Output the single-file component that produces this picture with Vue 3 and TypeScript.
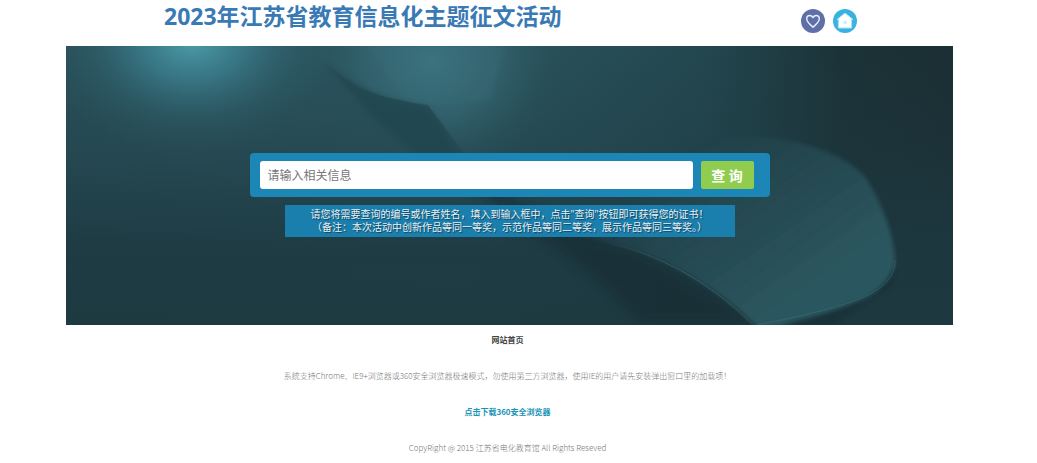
<script setup lang="ts">
import { ref } from 'vue'

const keyword = ref<string>('')
const title = '2023年江苏省教育信息化主题征文活动'
const notes: string[] = [
  '请您将需要查询的编号或作者姓名，填入到输入框中，点击"查询"按钮即可获得您的证书！',
  '（备注：本次活动中创新作品等同一等奖，示范作品等同二等奖，展示作品等同三等奖。）',
]
</script>

<template>
  <div class="page">
    <header class="header">
      <h1 class="title">{{ title }}</h1>
      <nav class="actions">
        <a href="#" class="action" aria-label="收藏">
          <svg viewBox="0 0 24 24">
            <circle cx="12" cy="12" r="12" fill="#5f6fa8" />
            <path
              d="M12 18.2C9 15.6 5.7 13 5.7 9.8C5.7 7.8 7.1 6.5 8.8 6.5C10.2 6.5 11.3 7.3 12 8.600C12.7 7.3 13.8 6.5 15.2 6.5C16.9 6.5 18.3 7.8 18.3 9.8C18.3 13 15 15.6 12 18.2Z"
              fill="none" stroke="#e8f0ff" stroke-width="1.4" stroke-linejoin="round"
            />
          </svg>
        </a>
        <a href="#" class="action" aria-label="首页">
          <svg viewBox="0 0 24 24">
            <circle cx="12" cy="12" r="12" fill="#38b2e0" />
            <path d="M12 4L20 10.5H18.6V19H5.4V10.5H4Z" fill="#fff" stroke="#a9e1f6" stroke-width="1" stroke-linejoin="round" />
            <circle cx="12" cy="13.5" r="2" fill="#d3eefa" />
          </svg>
        </a>
      </nav>
    </header>

    <main class="banner">
      <svg class="backdrop" viewBox="0 0 887 279" preserveAspectRatio="none" aria-hidden="true">
        <defs>
          <linearGradient id="base" x1="0" y1="0" x2="1" y2="0">
            <stop offset="0" stop-color="#29505a" />
            <stop offset="0.45" stop-color="#2b555f" />
            <stop offset="0.72" stop-color="#23474f" />
            <stop offset="0.88" stop-color="#1b3237" />
            <stop offset="1" stop-color="#1b2f34" />
          </linearGradient>
          <linearGradient id="shade" x1="0" y1="0" x2="0" y2="1">
            <stop offset="0" stop-color="#1d3840" stop-opacity="0" />
            <stop offset="0.35" stop-color="#1d3840" stop-opacity="0.3" />
            <stop offset="0.75" stop-color="#1d3840" stop-opacity="0.9" />
            <stop offset="1" stop-color="#1e3940" stop-opacity="0.95" />
          </linearGradient>
          <radialGradient id="glow" gradientUnits="userSpaceOnUse" cx="0" cy="0" r="1" gradientTransform="translate(126 -6) scale(150 115)">
            <stop offset="0" stop-color="#4c9dab" />
            <stop offset="0.35" stop-color="#3d8190" stop-opacity="0.75" />
            <stop offset="0.7" stop-color="#316874" stop-opacity="0.3" />
            <stop offset="1" stop-color="#2c5a64" stop-opacity="0" />
          </radialGradient>
          <radialGradient id="sheen" gradientUnits="userSpaceOnUse" cx="0" cy="0" r="1" gradientTransform="translate(365 15) scale(125 110)">
            <stop offset="0" stop-color="#3b7480" stop-opacity="0.9" />
            <stop offset="0.5" stop-color="#386c78" stop-opacity="0.6" />
            <stop offset="1" stop-color="#2c5a64" stop-opacity="0" />
          </radialGradient>
          <linearGradient id="leaf" gradientUnits="userSpaceOnUse" x1="640" y1="95" x2="740" y2="240">
            <stop offset="0" stop-color="#2b555d" stop-opacity="0" />
            <stop offset="0.4" stop-color="#28515a" stop-opacity="0.6" />
            <stop offset="1" stop-color="#2b565e" />
          </linearGradient>
          <linearGradient id="rim" x1="0" y1="0" x2="1" y2="0">
            <stop offset="0" stop-color="#4a7f88" stop-opacity="0" />
            <stop offset="0.6" stop-color="#4a7f88" stop-opacity="0.5" />
            <stop offset="1" stop-color="#4a7f88" stop-opacity="0.3" />
          </linearGradient>
          <filter id="soft" x="-20%" y="-20%" width="140%" height="140%">
            <feGaussianBlur stdDeviation="6" />
          </filter>
          <filter id="fine" x="-10%" y="-10%" width="120%" height="120%">
            <feGaussianBlur stdDeviation="2" />
          </filter>
        </defs>
        <rect width="887" height="279" fill="url(#base)" />
        <rect width="887" height="279" fill="url(#shade)" />
        <rect width="887" height="279" fill="url(#glow)" />
        <path d="M240 0L275 30Q305 50 335 54Q350 58 362 59L400 110H500V0Z" fill="url(#sheen)" />
        <path d="M340 54Q380 61 425 54L440 0H300Z" fill="#42808d" opacity="0.12" filter="url(#fine)" />
        <path d="M262 18Q300 50 350 58Q366 60 373 76L394 108H350Q300 70 262 18Z" fill="#1f434c" opacity="0.5" filter="url(#fine)" />
        <path d="M400 135Q450 150 500 180Q610 215 690 279H575Q520 215 470 190Z" fill="#172b30" opacity="0.6" filter="url(#soft)" />
        <path
          d="M480 180Q570 90 690 90Q770 98 800 132Q826 174 829 214Q828 234 800 252Q760 269 731 275L700 285L687 277Q620 212 531 194Z"
          fill="url(#leaf)" filter="url(#fine)"
        />
        <path d="M829 218Q828 238 800 254Q760 271 720 279H768Q790 262 826 240Z" fill="#182b30" opacity="0.5" filter="url(#fine)" />
        <path d="M531 194Q620 212 687 279" fill="none" stroke="url(#rim)" stroke-width="1" />
        <path d="M690 279Q770 264 800 250Q830 236 829 214" fill="none" stroke="#4a7f88" stroke-opacity="0.35" stroke-width="1" />
      </svg>

      <form class="search" @submit.prevent>
        <input v-model="keyword" class="field" type="text" placeholder="请输入相关信息" aria-label="查询信息" />
        <button class="submit" type="submit">查 询</button>
      </form>
      <div class="notice">
        <p v-for="note in notes" :key="note">{{ note }}</p>
      </div>
    </main>

    <footer class="footer">
      <a href="#" class="home">网站首页</a>
      <p>系统支持Chrome、IE9+浏览器或360安全浏览器极速模式，勿使用第三方浏览器，使用IE的用户请先安装弹出窗口里的加载项！</p>
      <a href="#" class="download">点击下载360安全浏览器</a>
      <p>CopyRight @ 2015 江苏省电化教育馆 All Rights Reseved</p>
    </footer>
  </div>
</template>

<style>
body {
  margin: 0;
  background: #fff;
}
</style>

<style scoped>
.page {
  padding: 0 84px 0 66px;
  font-family: "Open Sans", "Noto Sans CJK SC", sans-serif;
}

.header {
  display: flex;
  justify-content: space-between;
  box-sizing: border-box;
  height: 46px;
  padding: 0 96px 0 98px;
}

.title {
  margin: 0;
  color: #397ab5;
  font-size: 23px;
  font-weight: 700;
  line-height: 32px;
  white-space: nowrap;
}

.actions {
  display: flex;
  gap: 8px;
  padding-top: 9px;
}

.action,
.action svg {
  display: block;
  width: 24px;
  height: 24px;
}

.banner {
  position: relative;
  display: flex;
  flex-direction: column;
  align-items: center;
  gap: 8px;
  padding: 107px 0 88px;
  background: #23444c;
}

.backdrop {
  position: absolute;
  inset: 0;
  width: 100%;
  height: 100%;
}

.search {
  position: relative;
  display: flex;
  gap: 8px;
  box-sizing: border-box;
  width: 100%;
  max-width: 520px;
  padding: 8px 16px 8px 10px;
  border-radius: 4px;
  background: #1c87b7;
}

.field {
  flex: 1;
  min-width: 0;
  box-sizing: border-box;
  height: 28px;
  padding: 0 8px;
  border: 0;
  border-radius: 3px;
  background: #fff;
  color: #333;
  font-family: inherit;
  font-size: 12px;
}

.field::placeholder {
  color: #777;
  opacity: 1;
}

.submit {
  width: 53px;
  height: 28px;
  padding: 0;
  border: 0;
  border-radius: 2px;
  background: #90cd4e;
  color: #fff;
  font-family: inherit;
  font-size: 14px;
  font-weight: 700;
}

.notice {
  position: relative;
  box-sizing: border-box;
  width: 100%;
  max-width: 450px;
  padding: 3px 0;
  background: #1b7fae;
  color: #e6f2f7;
  font-size: 10px;
  line-height: 13px;
  text-align: center;
  text-shadow: 1px 1px 1px #123c50;
  white-space: nowrap;
}

.notice p,
.footer p {
  margin: 0;
}

.footer {
  display: flex;
  flex-direction: column;
  align-items: center;
  gap: 24px;
  padding: 9px 4px 0 0;
  color: #777;
  font-family: "Noto Sans CJK SC", sans-serif;
  font-size: 8px;
  font-weight: 300;
  line-height: 12px;
  white-space: nowrap;
}

.home,
.download {
  color: #444;
  font-weight: 700;
  text-decoration: none;
}

.download {
  color: #1a93b5;
}
</style>
